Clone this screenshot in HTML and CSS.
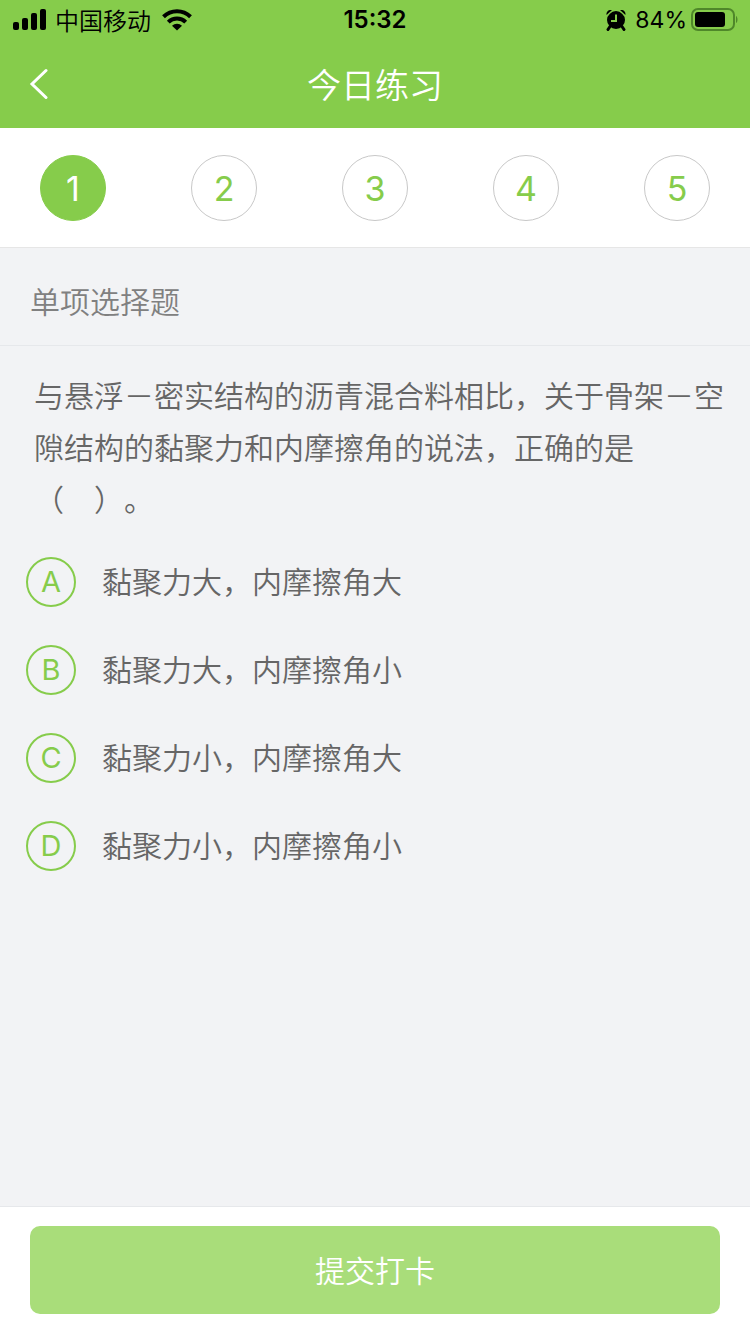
FILE: index.html
```
<!DOCTYPE html>
<html lang="zh-CN">
<head>
    <meta charset="UTF-8">
    <meta name="viewport" content="width=device-width, initial-scale=1.0">
    <title>今日练习</title>
    <link rel="stylesheet" href="styles.css">
</head>
<body>
    <header class="header">
        <div class="status-bar">
            <div class="status-left">
                <svg class="signal" viewBox="0 0 34 22" width="34" height="22">
                    <rect x="1" y="13" width="6" height="8" rx="2"/>
                    <rect x="10" y="9" width="6" height="12" rx="2"/>
                    <rect x="19" y="4" width="6" height="17" rx="2"/>
                    <rect x="28" y="0" width="6" height="21" rx="2"/>
                </svg>
                <span class="carrier">中国移动</span>
                <svg class="wifi" viewBox="0 0 30 22" width="30" height="22" fill="none" stroke="#000" stroke-width="4">
                    <path d="M1.5 7.7a19.3 19.3 0 0 1 27 0"/>
                    <path d="M6.3 13.1a12.4 12.4 0 0 1 17.4 0"/>
                    <path d="M15 21.5l-5-4.7a7.4 7.4 0 0 1 10 0z" fill="#000" stroke="none"/>
                </svg>
            </div>
            <div class="status-time">15:32</div>
            <div class="status-right">
                <svg class="alarm" viewBox="0 0 20 22" width="20" height="22">
                    <circle cx="10" cy="11" r="9"/>
                    <path d="M0.6 6C0 2.6 2.4 0.4 6 1zM19.4 6C20 2.6 17.6 0.4 14 1z"/>
                    <path d="M4 17.5l-2 3M16 17.5l2 3" fill="none" stroke="#000" stroke-width="3" stroke-linecap="round"/>
                    <path d="M0.8 7.4L7.2 1M19.2 7.4L12.8 1" fill="none" stroke="#86cc4b" stroke-width="1"/>
                    <path d="M10 5.5v6.5H5" fill="none" stroke="#86cc4b" stroke-width="2"/>
                </svg>
                <span class="percent">84%</span>
                <svg class="battery" viewBox="0 0 48 24" width="48" height="24">
                    <rect x="2" y="1" width="42" height="21" rx="6" fill="none" stroke="#4f872a" stroke-width="2"/>
                    <rect x="5" y="4" width="30" height="15" rx="3"/>
                    <path d="M46 8c2 1 2 6 0 7z" fill="#4f872a"/>
                </svg>
            </div>
        </div>
        <div class="nav-bar">
            <button class="back-btn" type="button" aria-label="返回">
                <svg viewBox="0 0 20 32" width="20" height="32" fill="none" stroke="#fff" stroke-width="3" stroke-linecap="round">
                    <path d="M18 2.5L4 16L18 29.5"/>
                </svg>
            </button>
            <h1 class="nav-title">今日练习</h1>
        </div>
    </header>

    <nav class="steps">
        <button class="step active" type="button">1</button>
        <button class="step" type="button">2</button>
        <button class="step" type="button">3</button>
        <button class="step" type="button">4</button>
        <button class="step" type="button">5</button>
    </nav>

    <main class="content">
        <h2 class="question-type">单项选择题</h2>
        <p class="question" id="question">与悬浮－密实结构的沥青混合料相比，关于骨架－空隙结构的黏聚力和内摩擦角的说法，正确的是<span class="blank">（　）。</span></p>
        <div class="options" role="radiogroup" aria-labelledby="question">
            <label class="option">
                <input type="radio" name="answer" value="A">
                <span class="letter">A</span>
                <span class="option-text">黏聚力大，内摩擦角大</span>
            </label>
            <label class="option">
                <input type="radio" name="answer" value="B">
                <span class="letter">B</span>
                <span class="option-text">黏聚力大，内摩擦角小</span>
            </label>
            <label class="option">
                <input type="radio" name="answer" value="C">
                <span class="letter">C</span>
                <span class="option-text">黏聚力小，内摩擦角大</span>
            </label>
            <label class="option">
                <input type="radio" name="answer" value="D">
                <span class="letter">D</span>
                <span class="option-text">黏聚力小，内摩擦角小</span>
            </label>
        </div>
    </main>

    <footer class="footer">
        <button class="submit-btn" type="button">提交打卡</button>
    </footer>
</body>
</html>
```

FILE: styles.css
```
* {
    margin: 0;
    padding: 0;
    box-sizing: border-box;
}

body {
    min-height: 100vh;
    display: flex;
    flex-direction: column;
    background: #f2f3f5;
    color: #666;
    font-family: "Noto Sans CJK SC", sans-serif;
    font-size: 30px;
    font-weight: 350;
    text-spacing-trim: space-all;
}

button {
    border: none;
    background: none;
    font: inherit;
    cursor: pointer;
}

svg {
    display: block;
}

.header {
    background: #86cc4b;
}

/* status bar */
.status-bar {
    display: grid;
    grid-template-columns: 1fr auto 1fr;
    align-items: center;
    height: 40px;
    padding: 0 12px;
    color: #000;
    font-size: 24px;
    line-height: 40px;
}

.status-left, .status-right {
    display: flex;
    align-items: center;
    gap: 9px;
}

.wifi {
    margin-left: 2px;
}

.status-right {
    justify-content: flex-end;
    gap: 3px;
}

.alarm {
    margin-right: 6px;
}

.percent {
    font-family: Inter, sans-serif;
    font-size: 23px;
    font-weight: 400;
}

.status-time {
    font-family: Inter, sans-serif;
    font-weight: 600;
}

/* title bar */
.nav-bar {
    display: grid;
    grid-template-columns: 80px 1fr 80px;
    align-items: center;
    height: 88px;
    color: #fff;
}

.back-btn {
    height: 88px;
    padding-left: 28px;
}

.nav-title {
    font-size: 34px;
    font-weight: 350;
    line-height: 88px;
    text-align: center;
}

/* question numbers */
.steps {
    display: flex;
    justify-content: space-between;
    padding: 27px 40px 26px;
    background: #fff;
    border-bottom: 1px solid #e6e6e6;
}

.step {
    width: 66px;
    height: 66px;
    border: 1px solid #c8c8c8;
    border-radius: 50%;
    color: #86cc4b;
    font-family: Inter, sans-serif;
    font-size: 34px;
    font-weight: 400;
}

.step.active {
    background: #86cc4b;
    border-color: #86cc4b;
    color: #fff;
}

/* question */
.content {
    flex: 1;
}

.question-type {
    padding: 26px 30px 19px;
    border-bottom: 1px solid #e6e8eb;
    color: #808080;
    font-size: 30px;
    font-weight: 350;
    line-height: 52px;
}

.question {
    padding: 22px 24px 0 34px;
    line-height: 52px;
}

.blank {
    white-space: nowrap;
}

.options {
    padding: 14px 26px 0;
}

.option {
    display: grid;
    grid-template-columns: 50px 1fr;
    column-gap: 26px;
    align-items: center;
    min-height: 88px;
    line-height: 52px;
    cursor: pointer;
}

.option input {
    grid-area: 1 / 1;
    appearance: none;
    width: 50px;
    height: 50px;
    border: 2px solid #86cc4b;
    border-radius: 50%;
    cursor: pointer;
}

.letter {
    grid-area: 1 / 1;
    color: #86cc4b;
    font-family: Inter, sans-serif;
    font-size: 29px;
    font-weight: 400;
    text-align: center;
}

.option-text {
    padding-bottom: 4px;
}

.option input:checked {
    background: #86cc4b;
}

.option input:checked + .letter {
    color: #fff;
}

/* submit */
.footer {
    padding: 19px 30px 20px;
    background: #fff;
    border-top: 1px solid #e6e8eb;
}

.submit-btn {
    width: 100%;
    height: 88px;
    padding-bottom: 2px;
    border-radius: 10px;
    background: #a9dd7a;
    color: #fff;
}
```
